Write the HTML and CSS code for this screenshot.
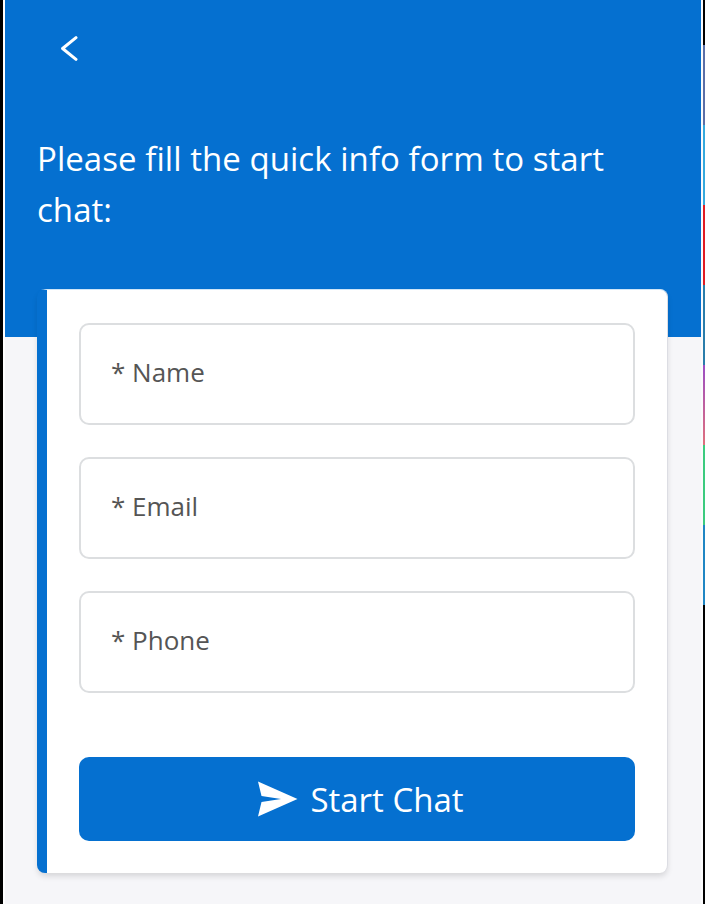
FILE: index.html
```html
<!DOCTYPE html>
<html lang="en">

<head>
    <meta charset="UTF-8">
    <meta name="viewport" content="width=device-width, initial-scale=1.0">
    <title>Start Chat</title>
    <link rel="stylesheet" href="styles.css">
</head>

<body>
    <div class="edge-left"></div>

    <div class="chat-panel">
        <div class="chat-header">
            <button type="button" class="back-button" aria-label="Back">
                <svg width="20" height="28" viewBox="0 0 20 28" fill="none" stroke="#fff" stroke-width="3" stroke-linecap="round" stroke-linejoin="round">
                    <path d="M18 3.6 L4.6 14.5 L18 25.4"></path>
                </svg>
            </button>
            <h1>Please fill the quick info form to start chat:</h1>
        </div>

        <form class="info-card">
            <input type="text" class="form-input" placeholder="* Name">
            <input type="text" class="form-input" placeholder="* Email">
            <input type="text" class="form-input" placeholder="* Phone">
            <button type="button" class="start-button">
                <svg width="40" height="36" viewBox="0 0 40 36" fill="#fff">
                    <path d="M0 .5 L39.5 18 L0 35.5 L3.5 21 L23 18 L3.5 15 Z"></path>
                </svg>
                <span>Start Chat</span>
            </button>
        </form>
    </div>

    <div class="edge-right">
        <div class="edge-gap"></div>
        <div class="app-strip">
            <span class="strip-black-top"></span>
            <span class="strip-indigo"></span>
            <span class="strip-sky"></span>
            <span class="strip-red"></span>
            <span class="strip-teal"></span>
            <span class="strip-purple"></span>
            <span class="strip-green"></span>
            <span class="strip-blue"></span>
            <span class="strip-black-bottom"></span>
        </div>
    </div>
</body>

</html>
```

FILE: styles.css
```css
:root {
    --primary-color: #0570d0;
    --border-color: #dcdee0;
    --text-secondary: #555;
    --background-secondary: #f6f6f9;
}

* {
    box-sizing: border-box;
}

html,
body {
    height: 100%;
}

body {
    margin: 0;
    display: flex;
    overflow: hidden;
    font-family: "Open Sans", "Noto Sans", sans-serif;
    background: var(--background-secondary);
}

.edge-left {
    width: 5px;
    flex: none;
    background: #fff;
    border-left: 3px solid #000;
}

.chat-panel {
    flex: 1;
    min-width: 0;
    background: var(--background-secondary);
}

.chat-header {
    height: 337px;
    padding: 34px 32px 0 32px;
    background: var(--primary-color);
}

.back-button {
    display: block;
    margin-left: 21px;
    padding: 0;
    border: none;
    background: none;
    line-height: 0;
}

.chat-header h1 {
    margin: 71px 0 0;
    color: #fff;
    font-size: 33px;
    font-weight: 400;
    line-height: 51px;
    letter-spacing: 0.05px;
}

.info-card {
    display: flex;
    flex-direction: column;
    gap: 32px;
    width: 631px;
    height: 584px;
    margin: -48px 0 0 32px;
    padding: 33px 32px 32px 32px;
    border-top: 1px solid #cfe5f7;
    border-right: 1px solid #dcdde3;
    border-left: 10px solid var(--primary-color);
    border-radius: 8px;
    background: #fff;
    box-shadow: 0 4px 6px -1px rgba(0, 0, 0, 0.14);
}

.form-input {
    width: 100%;
    height: 102px;
    flex: none;
    padding: 0 30px 4px;
    border: 2px solid var(--border-color);
    border-radius: 10px;
    font-family: inherit;
    font-size: 26px;
    background: #fff;
}

.form-input::placeholder {
    color: var(--text-secondary);
    opacity: 1;
}

.start-button {
    display: flex;
    align-items: center;
    justify-content: center;
    gap: 12px;
    height: 84px;
    flex: none;
    margin-top: 32px;
    padding-left: 14px;
    border: none;
    border-radius: 10px;
    color: #fff;
    font-family: inherit;
    font-size: 33px;
    background: var(--primary-color);
}

.edge-right {
    width: 4px;
    flex: none;
    display: flex;
}

.edge-gap {
    width: 2px;
    background: #fbfbfc;
}

.app-strip {
    width: 2px;
    display: flex;
    flex-direction: column;
}

.app-strip span {
    flex: none;
    height: 80px;
}

.app-strip .strip-black-top {
    height: 45px;
    background: #000;
}

.strip-indigo {
    background: #5a6fa8;
}

.strip-sky {
    background: #35a9dd;
}

.strip-red {
    background: #e01b24;
}

.strip-teal {
    background: #2a7dab;
}

.strip-purple {
    background: linear-gradient(#9b4fc4, #e0707c);
}

.strip-green {
    background: #3ccb7f;
}

.strip-blue {
    background: #1f86c4;
}

.app-strip .strip-black-bottom {
    flex: 1;
    background: #000;
}
```
